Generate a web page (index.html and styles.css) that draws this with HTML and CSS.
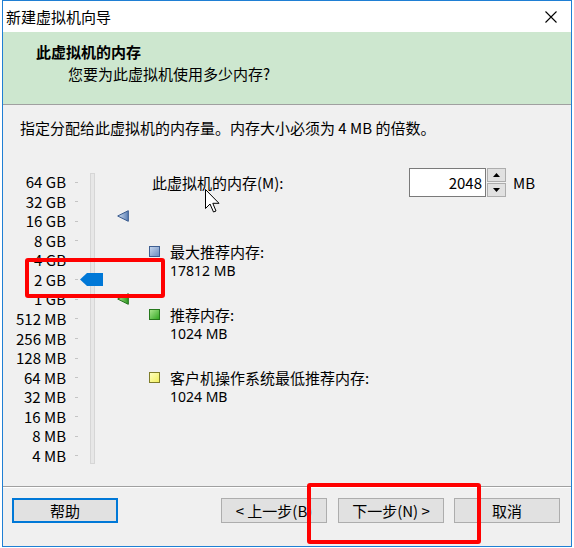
FILE: index.html
```html
<!DOCTYPE html>
<html lang="zh-CN">
<head>
<meta charset="utf-8">
<title>新建虚拟机向导</title>
<link rel="stylesheet" href="styles.css">
</head>
<body>
<div class="window">
  <div class="titlebar">
    <span class="title">新建虚拟机向导</span>
    <svg class="close" width="12" height="12" viewBox="0 0 12 12"><path d="M0.5 0.5 L11.5 11.5 M11.5 0.5 L0.5 11.5" stroke="#000" stroke-width="1.1" fill="none"/></svg>
  </div>
  <div class="header">
    <div class="h-title">此虚拟机的内存</div>
    <div class="h-sub">您要为此虚拟机使用多少内存?</div>
  </div>
  <div class="content">
    <p class="intro">指定分配给此虚拟机的内存量。内存大小必须为 4 MB 的倍数。</p>
    <div class="main">
      <div class="slider">
        <ul class="scale">
          <li><span class="lbl">64 GB</span><span class="tick"></span></li>
          <li><span class="lbl">32 GB</span><span class="tick"></span></li>
          <li><span class="lbl">16 GB</span><span class="tick"></span></li>
          <li><span class="lbl">8 GB</span><span class="tick"></span></li>
          <li><span class="lbl">4 GB</span><span class="tick"></span></li>
          <li><span class="lbl">2 GB</span><span class="tick"></span></li>
          <li><span class="lbl">1 GB</span><span class="tick"></span></li>
          <li><span class="lbl">512 MB</span><span class="tick"></span></li>
          <li><span class="lbl">256 MB</span><span class="tick"></span></li>
          <li><span class="lbl">128 MB</span><span class="tick"></span></li>
          <li><span class="lbl">64 MB</span><span class="tick"></span></li>
          <li><span class="lbl">32 MB</span><span class="tick"></span></li>
          <li><span class="lbl">16 MB</span><span class="tick"></span></li>
          <li><span class="lbl">8 MB</span><span class="tick"></span></li>
          <li><span class="lbl">4 MB</span><span class="tick"></span></li>
        </ul>
        <div class="track"></div>
        <div class="thumb"></div>
        <svg class="marker marker-max" width="12" height="12" viewBox="0 0 12 12">
          <defs><linearGradient id="gb" x1="0" y1="0" x2="1" y2="0"><stop offset="0" stop-color="#d6e2f2"/><stop offset="1" stop-color="#5b7fb4"/></linearGradient></defs>
          <path d="M0.7 6 L11.3 0.7 L11.3 11.3 Z" fill="url(#gb)" stroke="#34578c" stroke-width="1"/>
        </svg>
        <svg class="marker marker-rec" width="12" height="12" viewBox="0 0 12 12">
          <defs><linearGradient id="gg" x1="0" y1="0" x2="1" y2="0"><stop offset="0" stop-color="#a8e08a"/><stop offset="1" stop-color="#2f9a22"/></linearGradient></defs>
          <path d="M0.7 6 L11.3 0.7 L11.3 11.3 Z" fill="url(#gg)" stroke="#1f6f18" stroke-width="1"/>
        </svg>
      </div>
      <div class="panel">
        <div class="mem-row">
          <span class="mem-label">此虚拟机的内存(M):</span>
          <div class="spin">
            <div class="spin-input">2048</div>
            <div class="spin-btns">
              <div class="sb"><svg width="7" height="4" viewBox="0 0 7 4"><path d="M0 4 L3.5 0 L7 4 Z" fill="#000"/></svg></div>
              <div class="sb"><svg width="7" height="4" viewBox="0 0 7 4"><path d="M0 0 L3.5 4 L7 0 Z" fill="#000"/></svg></div>
            </div>
          </div>
          <span class="unit">MB</span>
        </div>
        <div class="legend">
          <div class="item"><span class="sq sq-blue"></span><div class="item-text"><div class="cap">最大推荐内存:</div><div class="val">17812 MB</div></div></div>
          <div class="item"><span class="sq sq-green"></span><div class="item-text"><div class="cap">推荐内存:</div><div class="val">1024 MB</div></div></div>
          <div class="item"><span class="sq sq-yellow"></span><div class="item-text"><div class="cap">客户机操作系统最低推荐内存:</div><div class="val">1024 MB</div></div></div>
        </div>
      </div>
    </div>
  </div>
  <div class="footer">
    <button class="btn btn-default">帮助</button>
    <div class="spacer"></div>
    <button class="btn">&lt; 上一步(B)</button>
    <button class="btn btn-next">下一步(N) &gt;</button>
    <button class="btn btn-cancel">取消</button>
  </div>
</div>
<div class="annot annot-1"></div>
<div class="annot annot-2"></div>
<svg class="cursor" width="16" height="25" viewBox="0 0 16 25"><path d="M0.5 0.5 V19.5 L5 15 L8.5 23 L11 22 L7.8 14.3 H14 Z" fill="#fff" stroke="#000" stroke-width="1" stroke-linejoin="miter"/></svg>
</body>
</html>
```
FILE: styles.css
```css
html, body {
  margin: 0;
  padding: 0;
  background: #ffffff;
}
body {
  position: relative;
  width: 574px;
  height: 548px;
  overflow: hidden;
  font-family: "Noto Sans CJK SC", "Noto Sans", sans-serif;
  font-size: 15px;
  color: #000;
}
.window {
  margin-left: 2px;
  width: 570px;
  height: 547px;
  box-sizing: border-box;
  border: 1px solid #1f7fd4;
  display: flex;
  flex-direction: column;
  background: #f0f0f0;
}
.titlebar {
  height: 31px;
  flex: 0 0 31px;
  background: #ffffff;
  display: flex;
  align-items: center;
  padding-left: 3px;
  padding-right: 14px;
}
.title {
  flex: 1;
  line-height: 31px;
  font-size: 15px;
}
.close {
  display: block;
}
.header {
  flex: 0 0 73px;
  height: 73px;
  box-sizing: border-box;
  background: #cde7cf;
  border-bottom: 1px solid #a0a0a0;
  padding: 10px 0 0 33px;
}
.h-title {
  font-weight: bold;
  line-height: 20px;
}
.h-sub {
  margin-top: 2px;
  padding-left: 32px;
  line-height: 20px;
}
.content {
  flex: 1;
  display: flex;
  flex-direction: column;
}
.intro {
  margin: 0;
  padding: 12px 0 0 17px;
  line-height: 21px;
}
.main {
  margin-top: 30px;
  padding-left: 13px;
  display: flex;
}
.slider {
  position: relative;
  flex: 0 0 133px;
  display: flex;
  align-items: flex-start;
}
.scale {
  list-style: none;
  margin: 5px 0 0 0;
  padding: 0;
  height: 292px;
  display: flex;
  flex-direction: column;
  justify-content: space-between;
}
.scale li {
  display: flex;
  align-items: center;
  line-height: 18px;
  height: 18px;
}
.lbl {
  width: 50px;
  text-align: right;
  white-space: nowrap;
}
.tick {
  width: 3px;
  height: 1px;
  margin-left: 9px;
  background: #c4c4c4;
}
.track {
  margin: 5px 0 0 12px;
  width: 5px;
  height: 291px;
  box-sizing: border-box;
  background: #e7e7e7;
  border: 1px solid #d6d6d6;
}
.thumb {
  position: absolute;
  left: 64px;
  top: 105px;
  width: 23px;
  height: 13px;
  background: #0078d7;
  clip-path: polygon(0 50%, 7px 0, 100% 0, 100% 100%, 7px 100%);
}
.marker {
  position: absolute;
  left: 101px;
  display: block;
}
.marker-max {
  top: 42px;
}
.marker-rec {
  top: 125px;
}
.panel {
  flex: 1;
}
.mem-row {
  display: flex;
  align-items: center;
  height: 29px;
}
.mem-label {
  flex: 0 0 260px;
  box-sizing: border-box;
  padding-left: 3px;
  line-height: 29px;
}
.spin {
  display: flex;
}
.spin-input {
  width: 77px;
  height: 29px;
  box-sizing: border-box;
  border: 1px solid #7a7a7a;
  background: #fff;
  text-align: right;
  padding-right: 3px;
  line-height: 27px;
}
.spin-btns {
  display: flex;
  flex-direction: column;
  gap: 1px;
  margin-left: 1px;
}
.sb {
  width: 19px;
  height: 14px;
  box-sizing: border-box;
  border: 1px solid #adadad;
  background: #e1e1e1;
  display: flex;
  align-items: center;
  justify-content: center;
}
.sb svg {
  display: block;
}
.unit {
  margin-left: 7px;
  line-height: 29px;
}
.legend {
  margin-top: 46px;
  display: flex;
  flex-direction: column;
  gap: 26px;
}
.item {
  display: flex;
  align-items: flex-start;
  gap: 10px;
}
.cap, .val {
  height: 18px;
  line-height: 18px;
  white-space: nowrap;
}
.sq {
  flex: 0 0 11px;
  width: 11px;
  height: 11px;
  box-sizing: border-box;
  margin-top: 3px;
}
.sq-blue {
  background: linear-gradient(135deg, #c4d4ec, #6d8ec0);
  border: 1px solid #3f5f92;
}
.sq-green {
  background: linear-gradient(135deg, #a6e48a, #34a824);
  border: 1px solid #26781c;
}
.sq-yellow {
  background: linear-gradient(135deg, #ffffc0, #f2f060);
  border: 1px solid #7f7d2a;
}
.val {
  font-family: "Noto Sans", "Noto Sans CJK SC", sans-serif;
  font-size: 14px;
  margin-top: 1px;
}
.footer {
  flex: 0 0 48px;
  height: 48px;
  border-top: 1px solid #a0a0a0;
  box-shadow: inset 0 1px 0 #ffffff;
  display: flex;
  align-items: flex-start;
  padding: 11px 11px 0 9px;
}
.spacer {
  flex: 1;
}
.btn {
  width: 106px;
  height: 25px;
  box-sizing: border-box;
  border: 1px solid #adadad;
  background: #e1e1e1;
  font-family: "Noto Sans CJK SC", "Noto Sans", sans-serif;
  font-size: 15px;
  line-height: 21px;
  padding: 0;
  color: #000;
}
.btn-default {
  border: 2px solid #0078d7;
}
.btn-next {
  margin-left: 11px;
}
.btn-cancel {
  margin-left: 10px;
}
.annot {
  position: absolute;
  box-sizing: border-box;
  border: 4px solid #ff0000;
  border-radius: 3px;
}
.annot-1 {
  left: 25px;
  top: 258px;
  width: 140px;
  height: 40px;
}
.annot-2 {
  left: 307px;
  top: 483px;
  width: 174px;
  height: 61px;
}
.cursor {
  position: absolute;
  left: 205px;
  top: 189px;
  display: block;
}
```
